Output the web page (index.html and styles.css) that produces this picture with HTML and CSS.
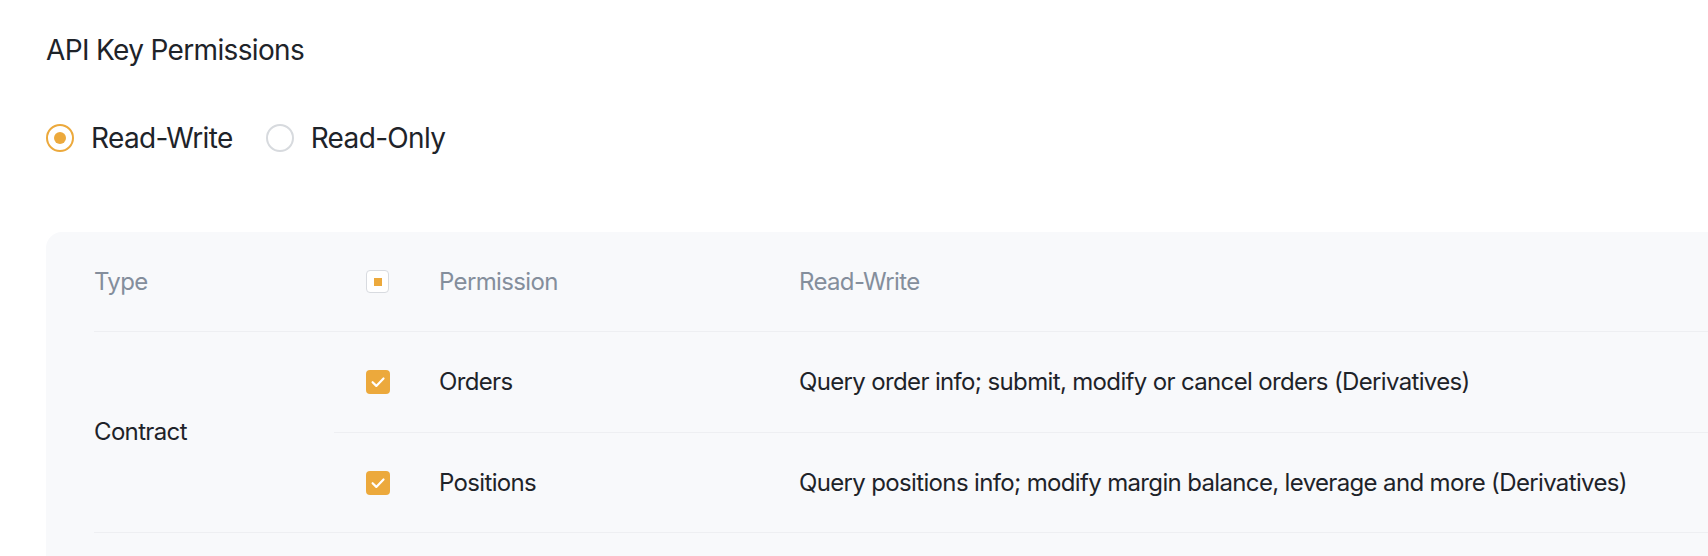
FILE: index.html
```html
<!DOCTYPE html>
<html lang="en">
<head>
<meta charset="utf-8">
<title>API Key Permissions</title>
<link rel="stylesheet" href="styles.css">
</head>
<body>
<div class="page">
  <h2 class="title">API Key Permissions</h2>
  <div class="radios">
    <label class="radio">
      <span class="radio-dot checked"></span>
      <span class="radio-label">Read-Write</span>
    </label>
    <label class="radio">
      <span class="radio-dot"></span>
      <span class="radio-label">Read-Only</span>
    </label>
  </div>

  <div class="panel">
    <div class="head">
      <div class="cell type">Type</div>
      <div class="cell check"><span class="cb partial"><span class="cb-inner"></span></span></div>
      <div class="cell perm">Permission</div>
      <div class="cell desc">Read-Write</div>
    </div>
    <div class="group">
      <div class="group-type">Contract</div>
      <div class="group-rows">
        <div class="row">
          <div class="cell check">
            <span class="cb on">
              <svg viewBox="0 0 24 24" width="24" height="24"><path d="M6.6 12.2l3.7 3.7 7.2-7.4" fill="none" stroke="#fff" stroke-width="2.2" stroke-linecap="round" stroke-linejoin="round"/></svg>
            </span>
          </div>
          <div class="cell perm">Orders</div>
          <div class="cell desc">Query order info; submit, modify or cancel orders (Derivatives)</div>
        </div>
        <div class="row">
          <div class="cell check">
            <span class="cb on">
              <svg viewBox="0 0 24 24" width="24" height="24"><path d="M6.6 12.2l3.7 3.7 7.2-7.4" fill="none" stroke="#fff" stroke-width="2.2" stroke-linecap="round" stroke-linejoin="round"/></svg>
            </span>
          </div>
          <div class="cell perm">Positions</div>
          <div class="cell desc">Query positions info; modify margin balance, leverage and more (Derivatives)</div>
        </div>
      </div>
    </div>
  </div>
</div>
</body>
</html>
```

FILE: styles.css
```css
* { box-sizing: border-box; }
html, body {
  margin: 0;
  padding: 0;
  background: #ffffff;
  overflow: hidden;
}
body {
  font-family: "Inter", "Noto Sans", sans-serif;
  color: #1e2329;
  letter-spacing: -0.65px;
}
.page {
  padding: 32px 0 0 46px;
  width: 1760px;
}
.title {
  margin: 0;
  font-size: 28px;
  line-height: 36px;
  font-weight: 400;
  color: #1e2329;
}
.radios {
  margin-top: 52px;
  display: flex;
  align-items: center;
  gap: 33px;
  height: 36px;
}
.radio {
  display: flex;
  align-items: center;
  gap: 17px;
}
.radio-dot {
  width: 28px;
  height: 28px;
  border-radius: 50%;
  border: 2px solid #d7dade;
  display: flex;
  align-items: center;
  justify-content: center;
}
.radio-dot.checked {
  border-color: #eca93c;
}
.radio-dot.checked::after {
  content: "";
  width: 12px;
  height: 12px;
  border-radius: 50%;
  background: #eca93c;
}
.radio-label {
  font-size: 28px;
  line-height: 36px;
}
.panel {
  margin-top: 76px;
  background: #f8f9fb;
  border-radius: 16px 0 0 0;
  padding: 0 0 40px 48px;
}
.head {
  display: grid;
  grid-template-columns: 240px 105px 360px 1fr;
  align-items: center;
  height: 100px;
  border-bottom: 1px solid #eeeff2;
  color: #848e9c;
  font-size: 24px;
}
.cell { line-height: 32px; }
.check {
  padding-left: 32px;
  display: flex;
  align-items: center;
}
.group {
  display: grid;
  grid-template-columns: 240px 1fr;
  border-bottom: 1px solid #eeeff2;
}
.group-type {
  display: flex;
  align-items: center;
  font-size: 24px;
  line-height: 32px;
}
.row {
  display: grid;
  grid-template-columns: 105px 360px 1fr;
  align-items: center;
  height: 100px;
  font-size: 24px;
}
.row + .row {
  border-top: 1px solid #eeeff2;
}
.cb {
  width: 24px;
  height: 24px;
  border-radius: 4px;
  display: flex;
  align-items: center;
  justify-content: center;
}
.cb.on {
  background: #eca93c;
}
.cb.partial {
  width: 23px;
  height: 23px;
  border: 1.5px solid #d8dbe0;
  background: #ffffff;
  border-radius: 4px;
}
.cb-inner {
  width: 8px;
  height: 8px;
  background: #eca93c;
}
```
